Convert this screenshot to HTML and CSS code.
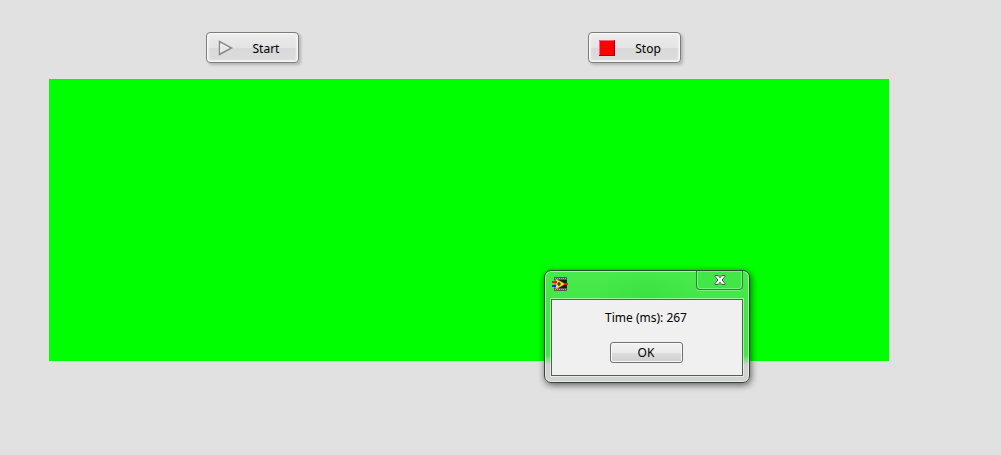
FILE: index.html
```html
<!DOCTYPE html>
<html lang="en">
<head>
<meta charset="utf-8">
<meta name="viewport" content="width=device-width, initial-scale=1">
<title>Reaction timer</title>
<link rel="stylesheet" href="styles.css">
</head>
<body>
<main class="panel">
  <div class="controls">
    <button class="action" type="button">
      <svg class="action-icon" viewBox="0 0 18 18" aria-hidden="true"><path d="M3.500 2.500v13l12-6.500z" fill="#e6e6e6" stroke="#8a8a8a" stroke-width="1.500"/><path d="M4.900 13V4.900l7.600 4.100" fill="none" stroke="#f6f6f6"/></svg>
      <span class="action-label">Start</span>
    </button>
    <button class="action" type="button">
      <svg class="action-icon" viewBox="0 0 18 18" aria-hidden="true"><path d="M1 1h16v16H1z" fill="#f00"/><path d="M1.500 17V1.500H17" fill="none" stroke="#ff5c86"/><path d="M1 16.500h15.500V1" fill="none" stroke="#a80010"/></svg>
      <span class="action-label">Stop</span>
    </button>
  </div>
  <div class="stage">
    <section class="dialog" role="dialog" aria-labelledby="result">
      <header class="titlebar">
        <svg class="app-icon" viewBox="0 0 16 16" aria-hidden="true">
          <path d="M2 1h13v14H2z" fill="#0d2308"/>
          <path d="M2 1h13v3H2zM2 12h13v3H2z" fill="#5b5560"/>
          <path d="M3 2.500h12M3 13.500h12" stroke="#b5b0b8" stroke-dasharray="1 1"/>
          <path d="M2 4h2v8H2z" fill="#8a7d80"/>
          <path d="M4 3v10l9-5z" fill="#ffe52e" stroke="#e09112" stroke-width=".6"/>
          <path d="M5 8h4M7 6v4" stroke="#211800" stroke-width="1.200"/>
          <path d="M0 5h5v2H0zM12 7h4v2h-4z" fill="#f01818"/>
          <path d="M0 9h4v2H0z" fill="#1428ff"/>
        </svg>
        <button class="close" type="button" aria-label="Close">
          <svg class="close-icon" viewBox="0 0 12 10" aria-hidden="true"><path d="M1 .5h3.200L6 2.700 7.800.5H11v1L8.100 5 11 8.500v1H7.800L6 7.300 4.200 9.500H1v-1L3.900 5 1 1.500z" fill="#f4f4f4" stroke="#4c5a55"/></svg>
        </button>
      </header>
      <div class="dialog-body">
        <p class="result" id="result">Time (ms): 267</p>
        <button class="ok" type="button">OK</button>
      </div>
    </section>
  </div>
</main>
</body>
</html>
```
FILE: styles.css
```css
* {
  box-sizing: border-box;
}

body {
  margin: 0;
  background: #e1e1e1;
  color: #000;
  font: 12px/16px "Noto Sans", "Open Sans", sans-serif;
}

button {
  margin: 0;
  padding: 0;
  color: inherit;
  font: inherit;
}

.panel {
  padding: 32px 112px 32px 49px;
}

.controls {
  display: flex;
  gap: 289px;
  padding: 0 157px;
  margin-bottom: 16px;
}

.action {
  display: flex;
  align-items: center;
  flex: none;
  width: 93px;
  height: 31px;
  padding: 0 8px 0 9px;
  border: 1px solid #7c7c7c;
  border-radius: 4px;
  background: linear-gradient(#ececec, #e4e4e4 50%, #d9d9d9 51%, #dcdcdc);
  box-shadow: inset 0 0 0 1px #f8f8f8, inset 0 0 2px 2px #f0f0f0, 2px 2px 3px #00000033;
}

.action-icon {
  width: 18px;
  height: 18px;
}

.action-label {
  flex: 1;
  padding: 2px 0 0 8px;
  text-align: center;
}

.stage {
  position: relative;
  min-height: 282px;
  background: #0f0;
}

.dialog {
  position: absolute;
  top: 191px;
  left: 495px;
  width: 206px;
  padding: 0 6px 6px;
  border: 1px solid #34463a;
  border-radius: 7px;
  background:
    radial-gradient(50px 26px at 50% 26px, #36e03cc0, #36e03c00) no-repeat,
    linear-gradient(#48e94c, #42e646 40px, #42e648 84px, #d2d2d2 94px);
  box-shadow: inset 0 0 0 1px #ffffff80, 1px 2px 7px #00000099;
}

.titlebar {
  display: flex;
  align-items: flex-start;
  justify-content: space-between;
  height: 28px;
}

.app-icon {
  width: 16px;
  height: 16px;
  margin: 5px 0 0 1px;
}

.close {
  display: flex;
  align-items: center;
  justify-content: center;
  width: 47px;
  height: 19px;
  border: 1px solid #238c2a;
  border-top: 0;
  border-radius: 0 0 4px 4px;
  background: #42e648;
  box-shadow: inset 0 0 0 1px #7af07d, 0 1px 0 #7af07d;
}

.close-icon {
  width: 12px;
  height: 10px;
}

.dialog-body {
  display: flex;
  flex-direction: column;
  align-items: center;
  gap: 16px;
  padding: 10px 4px 12px 2px;
  border: 1px solid #4c624f;
  background: #f0f0f0;
  box-shadow: 0 0 0 1px #ffffff80;
}

.result {
  margin: 0;
}

.ok {
  width: 73px;
  height: 21px;
  border: 1px solid #707070;
  border-radius: 3px;
  background: linear-gradient(#f2f2f2, #ebebeb 50%, #dddddd 51%, #cfcfcf);
  box-shadow: inset 0 0 0 1px #fafafa;
}
```
